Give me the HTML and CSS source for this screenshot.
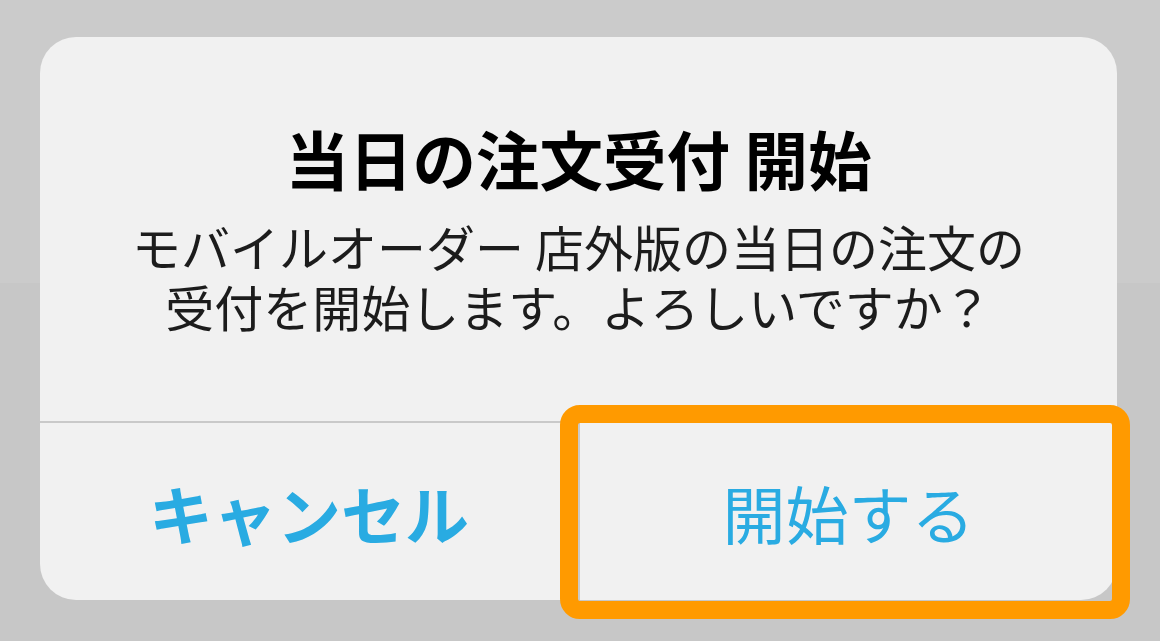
FILE: index.html
```html
<!DOCTYPE html>
<html lang="ja">
<head>
<meta charset="utf-8">
<link rel="stylesheet" href="styles.css">
</head>
<body>
<div class="stage">
  <div class="dialog">
    <div class="content">
      <div class="title">当日の注文受付 開始</div>
      <div class="message">
        <div class="line">モバイルオーダー 店外版の当日の注文の</div>
        <div class="line">受付を開始します。よろしいですか？</div>
      </div>
    </div>
    <div class="actions">
      <div class="btn cancel">キャンセル</div>
      <div class="btn ok">開始する</div>
    </div>
    <div class="highlight"></div>
  </div>
</div>
</body>
</html>
```
FILE: styles.css
```css
html, body {
  margin: 0;
  padding: 0;
}
body {
  width: 1160px;
  height: 641px;
  overflow: hidden;
  background: linear-gradient(to bottom, #cbcbcb 0, #cbcbcb 283px, #c7c7c7 283px, #c7c7c7 100%);
  font-family: "Noto Sans CJK JP", "Noto Sans", sans-serif;
}
.stage {
  padding: 37px 0 0 40px;
}
.dialog {
  position: relative;
  width: 1077px;
  height: 563px;
  background: #f1f1f1;
  border-radius: 36px;
  display: flex;
  flex-direction: column;
}
.content {
  height: 386px;
  box-sizing: border-box;
  padding-top: 80px;
  display: flex;
  flex-direction: column;
  align-items: center;
  border-bottom: 2px solid #c9c9c9;
}
.title {
  font-size: 63.5px;
  line-height: 80px;
  font-weight: 700;
  color: #000;
}
.message {
  margin-top: 19px;
  display: flex;
  flex-direction: column;
  align-items: center;
  font-size: 49px;
  color: #1c1c1c;
}
.line {
  height: 60px;
  line-height: 60px;
  white-space: nowrap;
}
.actions {
  flex: 1;
  display: grid;
  grid-template-columns: 540px 1fr;
}
.btn {
  display: flex;
  align-items: center;
  justify-content: center;
  color: #29abe2;
}
.cancel {
  font-size: 64px;
  font-weight: 700;
  border-right: 2px solid #c9c9c9;
}
.ok {
  font-size: 63px;
  font-weight: 400;
}
.highlight {
  position: absolute;
  left: 520px;
  top: 368px;
  width: 570px;
  height: 214px;
  box-sizing: border-box;
  border: 18px solid #ff9a00;
  border-radius: 20px;
}
```
